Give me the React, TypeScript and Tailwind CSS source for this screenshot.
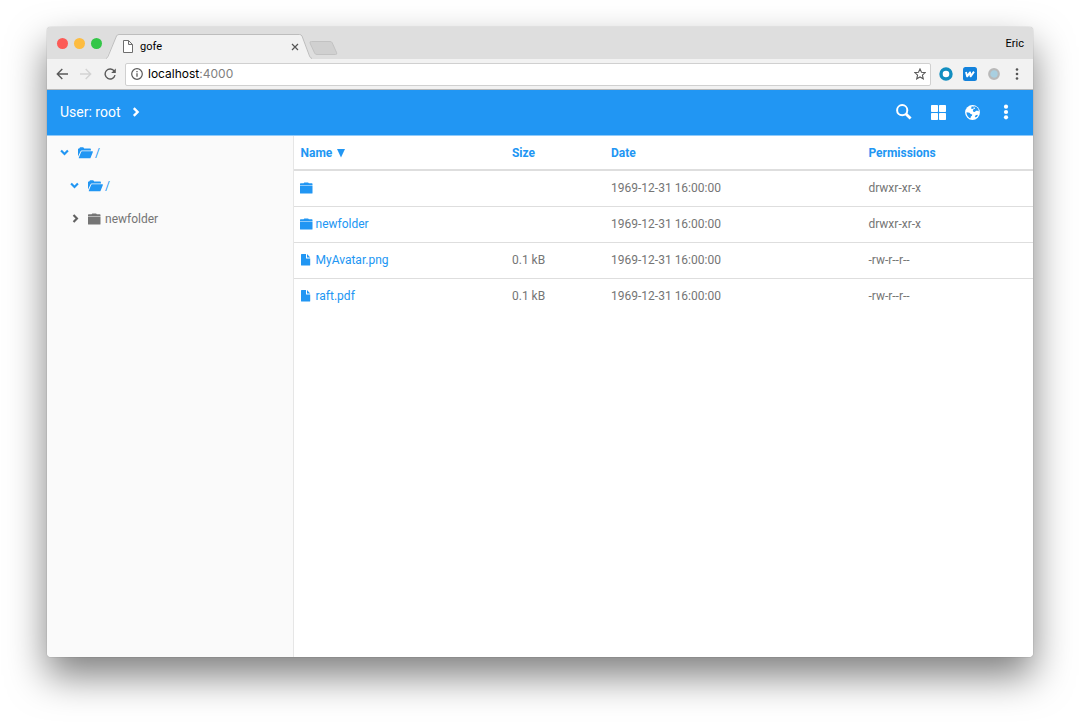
import React from "react";

type IconProps = { className?: string };

const FolderClosed = ({ className = "" }: IconProps) => (
  <svg viewBox="0 0 13 12" className={className} fill="currentColor" aria-hidden="true">
    <path d="M0 3.500h12.500v7.400q0 .5-.5.500H.5q-.5 0-.5-.5z" />
    <path d="M0 3V1.900q0-.6.6-.6h3L4.300.600h3.800l.8.700h3q.6 0 .6.600V3z" />
  </svg>
);

const FolderOpen = ({ className = "" }: IconProps) => (
  <svg viewBox="0 0 15 12" className={className} fill="currentColor" aria-hidden="true">
    <path d="M0 9.500V2.300q0-.7.7-.7h.5L1.700.700q.2-.4.600-.4h2.800q.4 0 .6.400l.5.900h6q.7 0 .7.700v1.200H3.600q-.7 0-.9.600z" />
    <path d="M4 4.300h10.500q.6 0 .4.600l-2.300 5.900q-.2.500-.8.500H1.200q-.6 0-.4-.5L3.200 4.800q.2-.5.800-.5z" />
  </svg>
);

const FileIcon = ({ className = "" }: IconProps) => (
  <svg viewBox="0 0 10 12" className={className} fill="currentColor" aria-hidden="true">
    <path d="M.7 0H5v4.600h4.200v6.300q0 .6-.6.600H.7q-.7 0-.7-.6V.6Q0 0 .7 0z" />
    <path d="M6 0l3.200 3.600H6z" />
  </svg>
);

const Chevron = ({ className = "" }: IconProps) => (
  <svg viewBox="0 0 10 10" className={className} fill="none" stroke="currentColor" strokeWidth="2.400" aria-hidden="true">
    <path d="M2.800 1.200L6.600 5 2.800 8.800" />
  </svg>
);

const iconButton = "flex size-5 items-center justify-center";

const rows = [
  { name: "", kind: "folder", size: "", date: "1969-12-31 16:00:00", mode: "drwxr-xr-x" },
  { name: "newfolder", kind: "folder", size: "", date: "1969-12-31 16:00:00", mode: "drwxr-xr-x" },
  { name: "MyAvatar.png", kind: "file", size: "0.1 kB", date: "1969-12-31 16:00:00", mode: "-rw-r--r--" },
  { name: "raft.pdf", kind: "file", size: "0.1 kB", date: "1969-12-31 16:00:00", mode: "-rw-r--r--" },
];

function TabStrip() {
  return (
    <div className="flex h-8 items-end bg-[#dedede] pl-[10px] pr-[9px] font-['Roboto',sans-serif]">
      <div className="flex h-8 items-center gap-[6px]">
        <button aria-label="Close window" className="size-[11px] rounded-full bg-[#fc5b57]" />
        <button aria-label="Minimize window" className="size-[11px] rounded-full bg-[#fdbc40]" />
        <button aria-label="Zoom window" className="size-[11px] rounded-full bg-[#34c648]" />
      </div>
      <div className="relative ml-1 flex h-[25px] w-[206px] items-center pl-4 pr-[13px]">
        <svg viewBox="0 0 206 25" preserveAspectRatio="none" className="absolute inset-0 size-full" aria-hidden="true">
          <path d="M0 25L10.500 2Q11.300.500 13 .5H193.500Q195.200.500 196 2L205 25z" fill="#f2f2f2" />
          <path d="M0 24.500Q1.500 24 2.200 22L10.500 2Q11.300.500 13 .5H193.500Q195.200.500 196 2L203.500 22Q204.200 24 206 24.500" fill="none" stroke="#bdbdbd" />
        </svg>
        <svg viewBox="0 0 10 13" className="relative ml-px h-[13px] w-[10px]" fill="#fff" stroke="#6e6e6e" aria-hidden="true">
          <path d="M.5.500h5l4 4v8h-9zM5.500.500v4h4" />
        </svg>
        <span className="relative ml-[7px] flex-1 text-[11px] leading-4 text-black">gofe</span>
        <button aria-label="Close tab" className="relative">
          <svg viewBox="0 0 8 8" className="size-2" stroke="#555" strokeWidth="1.200" aria-hidden="true">
            <path d="M1 1l6 6M7 1l-6 6" />
          </svg>
        </button>
      </div>
      <button aria-label="New tab" className="-ml-[3px] mb-1">
        <svg viewBox="0 0 29 14" className="h-[14px] w-[29px]" aria-hidden="true">
          <path d="M2.500.500H21q1.600 0 2.200 1.300l4.500 10q.5 1.700-1 1.700H8q-1.700 0-2.400-1.500L1 2Q.5.500 2.500.500z" fill="#d0d0d0" stroke="#c2c2c2" />
        </svg>
      </button>
      <button className="mb-[7px] ml-auto text-[11px] leading-4 text-black">Eric</button>
    </div>
  );
}

function AddressBar() {
  return (
    <div className="flex h-[31px] items-center border-b border-[#b9b9b9] bg-[#f2f2f2] pl-[9px] pr-[10px]">
      <button aria-label="Back">
        <svg viewBox="0 0 12 12" className="size-3" fill="none" stroke="#5a5a5a" strokeWidth="1.400" aria-hidden="true">
          <path d="M12 6H1.500M6.300 1L1.300 6l5 5" />
        </svg>
      </button>
      <button aria-label="Forward" className="ml-3">
        <svg viewBox="0 0 12 12" className="size-3" fill="none" stroke="#d3d3d3" strokeWidth="1.400" aria-hidden="true">
          <path d="M0 6h10.500M5.700 1l5 5-5 5" />
        </svg>
      </button>
      <button aria-label="Reload" className="ml-3">
        <svg viewBox="0 0 12 12" className="size-3" fill="none" stroke="#5a5a5a" strokeWidth="1.400" aria-hidden="true">
          <path d="M10.300 3.200A5 5 0 1 0 11 7.200" />
          <path d="M11.800.400v4.600H7.200z" fill="#5a5a5a" stroke="none" />
        </svg>
      </button>
      <div className="ml-[9px] flex h-[23px] min-w-0 flex-1 items-center rounded-[2px] border border-[#d0d0d0] bg-white pl-[5px] pr-1">
        <svg viewBox="0 0 12 12" className="size-3" fill="none" stroke="#5a5a5a" aria-hidden="true">
          <circle cx="6" cy="6" r="5.300" strokeWidth="1.200" />
          <path d="M6 5.200v3.600M6 3v1.300" strokeWidth="1.300" />
        </svg>
        <div role="textbox" aria-label="Address" className="ml-[5px] flex-1 text-[12px] leading-4 text-[#808080]">
          <span className="text-black">localhost</span>:4000
        </div>
        <button aria-label="Bookmark this page">
          <svg viewBox="0 0 12 12" className="size-3" fill="none" stroke="#5a5a5a" strokeWidth="1.100" aria-hidden="true">
            <path d="M6 .9l1.500 3.400 3.700.300-2.800 2.500.9 3.700L6 8.900l-3.300 1.900.9-3.700L.8 4.600l3.700-.3z" />
          </svg>
        </button>
      </div>
      <div className="ml-2 flex items-center gap-[10px]">
        <button aria-label="Ring extension">
          <svg viewBox="0 0 14 14" className="size-[14px]" aria-hidden="true">
            <circle cx="7" cy="7" r="5" fill="#fff" stroke="#128ec0" strokeWidth="3.400" />
          </svg>
        </button>
        <button aria-label="W extension">
          <svg viewBox="0 0 14 14" className="size-[14px]" aria-hidden="true">
            <rect width="14" height="14" rx="2.500" fill="#1382dc" />
            <path d="M3 5l1.200 4.400L7 5.400l.6 4L11 4.600" fill="none" stroke="#fff" strokeWidth="1.900" strokeLinejoin="round" />
          </svg>
        </button>
        <button aria-label="Circle extension">
          <svg viewBox="0 0 14 14" className="size-[14px]" aria-hidden="true">
            <circle cx="7" cy="7" r="4.800" fill="#a9cfe0" stroke="#b9b9b9" strokeWidth="2.200" />
          </svg>
        </button>
        <button aria-label="Browser menu">
          <svg viewBox="0 0 12 12" className="size-3" fill="#555" aria-hidden="true">
            <circle cx="6" cy="1.500" r="1.300" /><circle cx="6" cy="6" r="1.300" /><circle cx="6" cy="10.500" r="1.300" />
          </svg>
        </button>
      </div>
    </div>
  );
}

function AppBar() {
  return (
    <header className="flex h-[46px] items-center border-b border-[#90caf9] bg-[#2196f3] pb-px pl-[13px] pr-[17px] text-white">
      <a href="#root" className="flex items-center gap-[10px] text-[14px] leading-5">
        User: root
        <Chevron className="size-[10px]" />
      </a>
      <div className="ml-auto flex gap-[14px]">
        <button aria-label="Search" className={iconButton}>
          <svg viewBox="0 0 16 16" className="size-4" fill="none" stroke="currentColor" aria-hidden="true">
            <circle cx="6.200" cy="6.200" r="5.100" strokeWidth="2" />
            <path d="M10 10l4.600 4.600" strokeWidth="2.800" />
          </svg>
        </button>
        <button aria-label="Grid view" className={iconButton}>
          <svg viewBox="0 0 15 15" className="size-[15px]" fill="currentColor" aria-hidden="true">
            <rect width="7" height="7" rx=".7" /><rect x="8" width="7" height="7" rx=".7" />
            <rect y="8" width="7" height="7" rx=".7" /><rect x="8" y="8" width="7" height="7" rx=".7" />
          </svg>
        </button>
        <button aria-label="Language" className={iconButton}>
          <svg viewBox="0 0 15 15" className="size-[15px]" aria-hidden="true">
            <circle cx="7.500" cy="7.500" r="7.400" fill="#fff" />
            <path d="M6.800 1.300l1.300.4 1.200-.5 2.300.9 1.700 1.900.5 2-.7.300-1-.8-1.300.4-1 1-1.500-.2-.5-1.200.8-1-.6-.7-1.200.3-.7-.8z" fill="#2196f3" />
            <path d="M1.500 7.200l1.500.4 1.500.1 1.200 1.200 1.500.5-.2 1.300-1.100.9-.4 1.700-1.100-.2-1.700-1.800-1-2z" fill="#2196f3" />
            <path d="M10.600 10.300l1.700-.6.600.5-.9 1.400-1.500.9-.5-1z" fill="#2196f3" />
            <path d="M8.300 2.800l1.500-.2.400.7-.9.800-1-.3z" fill="#fff" />
          </svg>
        </button>
        <button aria-label="More options" className={iconButton}>
          <svg viewBox="0 0 6 16" className="h-4 w-[6px]" fill="currentColor" aria-hidden="true">
            <circle cx="3" cy="2.700" r="2.100" /><circle cx="3" cy="8" r="2.100" /><circle cx="3" cy="13.300" r="2.100" />
          </svg>
        </button>
      </div>
    </header>
  );
}

function Sidebar() {
  return (
    <nav aria-label="Folders" className="w-1/4 border-r border-[#e6e6e6] bg-[#fafafa] text-[12px] text-[#2196f3]">
      <ul>
        <li className="flex h-[33px] items-center pl-[13px]">
          <button aria-label="Collapse"><Chevron className="size-[9px] rotate-90" /></button>
          <a href="#top" className="ml-[9px] flex items-center gap-[2px]"><FolderOpen className="h-3 w-[15px]" />/</a>
        </li>
        <li className="flex h-[33px] items-center pl-[23px]">
          <button aria-label="Collapse"><Chevron className="size-[9px] rotate-90" /></button>
          <a href="#sub" className="ml-[9px] flex items-center gap-[2px]"><FolderOpen className="h-3 w-[15px]" />/</a>
        </li>
        <li className="flex h-[33px] items-center pl-6 text-[#757575]">
          <button aria-label="Expand" className="text-[#616161]"><Chevron className="size-[9px]" /></button>
          <a href="#newfolder" className="ml-2 flex items-center gap-1"><FolderClosed className="h-3 w-[13px]" />newfolder</a>
        </li>
      </ul>
    </nav>
  );
}

function FileTable() {
  return (
    <main className="min-w-0 flex-1 bg-white">
      <table className="w-full table-fixed border-collapse text-left text-[12px] leading-4 text-[#757575]">
        <thead>
          <tr className="h-[34px] border-b-2 border-[#dedede] text-[#2196f3]">
            <th className="w-[28.600%] px-[7px] font-bold">
              <button className="flex items-center gap-1">
                Name
                <svg viewBox="0 0 10 10" className="size-[10px]" fill="currentColor" aria-hidden="true"><path d="M1 1h8L5 9.500z" /></svg>
              </button>
            </th>
            <th className="w-[13.400%] px-[7px] font-bold">Size</th>
            <th className="w-[34.800%] px-[7px] font-bold">Date</th>
            <th className="px-[7px] font-bold">Permissions</th>
          </tr>
        </thead>
        <tbody>
          {rows.map((row, i) => (
            <tr key={i} className="h-9 border-b border-[#dedede] last:border-b-0">
              <td className="px-[6px]">
                <a href="#open" aria-label={row.name || "Parent folder"} className="flex items-center text-[#2196f3]">
                  <span className="w-4">
                    {row.kind === "folder" ? <FolderClosed className="h-3 w-[13px]" /> : <FileIcon className="ml-px h-3 w-[10px]" />}
                  </span>
                  {row.name}
                </a>
              </td>
              <td className="px-[7px]">{row.size}</td>
              <td className="px-[7px]">{row.date}</td>
              <td className="px-[7px]">{row.mode}</td>
            </tr>
          ))}
        </tbody>
      </table>
    </main>
  );
}

export default function App() {
  return (
    <div className="flex min-h-screen flex-col bg-white px-[47px] pb-[68px] pt-[27px] font-['Roboto',sans-serif]">
      <div className="flex flex-1 flex-col overflow-hidden rounded-[4px] shadow-[0_0_1px_rgba(0,0,0,0.5),0_19px_38px_rgba(0,0,0,0.5)]">
        <div className="font-['Inter',sans-serif]">
          <TabStrip />
          <AddressBar />
        </div>
        <AppBar />
        <div className="flex flex-1">
          <Sidebar />
          <FileTable />
        </div>
      </div>
    </div>
  );
}
